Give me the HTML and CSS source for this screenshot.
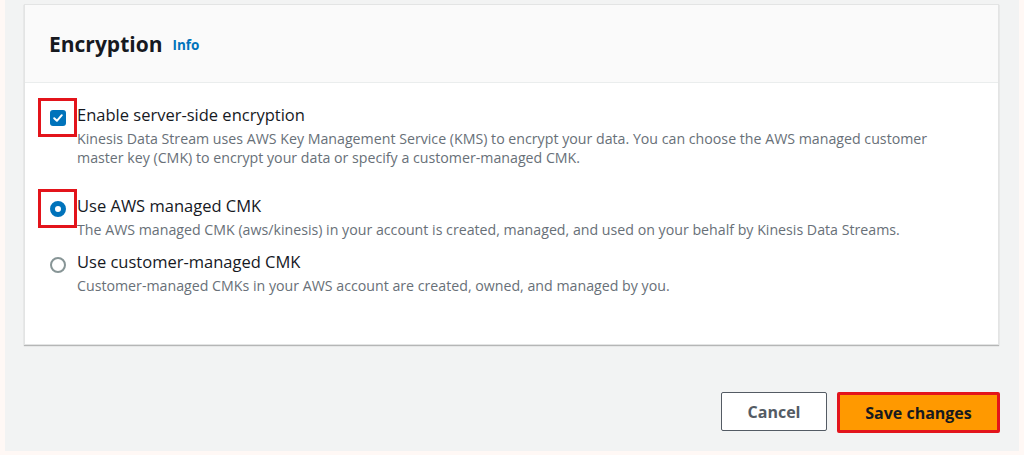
FILE: index.html
```html
<!DOCTYPE html>
<html lang="en">

<head>
    <meta charset="UTF-8">
    <title>Encryption settings</title>
    <link rel="stylesheet" href="styles.css">
</head>

<body>
    <div class="page">
        <div class="card">
            <div class="card_header">
                <h2>Encryption</h2>
                <a class="info" href="#">Info</a>
            </div>
            <div class="card_body">
                <div class="option option_check">
                    <span class="mark_wrap highlight">
                        <span class="checkbox">
                            <svg width="12" height="12" viewBox="0 0 12 12"><path d="M2.2 6.2 L4.9 8.8 L9.8 3.2" fill="none" stroke="#fff" stroke-width="2" stroke-linecap="round" stroke-linejoin="round"/></svg>
                        </span>
                    </span>
                    <div class="option_text">
                        <div class="label">Enable server-side encryption</div>
                        <div class="desc">Kinesis Data Stream uses AWS Key Management Service (KMS) to encrypt your data. You can choose the AWS managed customer master key (CMK) to encrypt your data or specify a customer-managed CMK.</div>
                    </div>
                </div>

                <div class="option option_radio">
                    <span class="mark_wrap highlight">
                        <span class="radio checked"></span>
                    </span>
                    <div class="option_text">
                        <div class="label">Use AWS managed CMK</div>
                        <div class="desc">The AWS managed CMK (aws/kinesis) in your account is created, managed, and used on your behalf by Kinesis Data Streams.</div>
                    </div>
                </div>

                <div class="option option_radio second">
                    <span class="mark_wrap">
                        <span class="radio"></span>
                    </span>
                    <div class="option_text">
                        <div class="label">Use customer-managed CMK</div>
                        <div class="desc">Customer-managed CMKs in your AWS account are created, owned, and managed by you.</div>
                    </div>
                </div>
            </div>
        </div>

        <div class="actions">
            <button class="btn btn_cancel">Cancel</button>
            <button class="btn btn_save">Save changes</button>
        </div>
    </div>
</body>

</html>
```

FILE: styles.css
```css
body {
    margin: 0;
    background: #fff8f5;
    font-family: "Open Sans", "Noto Sans", sans-serif;
    color: #16191f;
}

.page {
    margin: 0 5px;
    height: 451px;
    background: #f2f3f3;
    padding: 4px 20px 0 19px;
    box-sizing: border-box;
}

.card {
    background: #fff;
    border: 1px solid #e3e4e4;
    box-shadow: 0 1px 1px rgba(0, 0, 0, 0.25);
    height: 341px;
    box-sizing: border-box;
}

.card_header {
    height: 78px;
    background: #fafafa;
    border-bottom: 1px solid #eaeded;
    display: flex;
    align-items: center;
    padding: 0 0 0 24px;
    box-sizing: border-box;
}

.card_header h2 {
    margin: 0;
    font-size: 21px;
    font-weight: 700;
    color: #16191f;
}

.info {
    margin-left: 10px;
    margin-top: 3px;
    font-size: 13.5px;
    font-weight: 700;
    color: #0073bb;
    text-decoration: none;
}

.card_body {
    padding: 15px 20px 0 13px;
}

.option {
    display: flex;
    align-items: flex-start;
}

.mark_wrap {
    width: 39px;
    height: 39px;
    box-sizing: border-box;
    display: flex;
    align-items: center;
    justify-content: center;
    flex-shrink: 0;
}

.highlight {
    border: 3px solid #e3141b;
}

.option_text {
    padding-top: 7px;
    width: 885px;
}

.label {
    font-size: 16.5px;
    line-height: 20px;
    color: #16191f;
}

.desc {
    font-size: 14.2px;
    line-height: 19px;
    color: #687078;
    margin-top: 4px;
}

.option_radio {
    margin-top: 22px;
}

.option_radio.second {
    margin-top: 6px;
}

.checkbox {
    width: 16px;
    height: 16px;
    border-radius: 3px;
    background: #0073bb;
    display: flex;
    align-items: center;
    justify-content: center;
}

.radio {
    width: 16px;
    height: 16px;
    border-radius: 50%;
    border: 2px solid #879596;
    box-sizing: border-box;
}

.radio.checked {
    border: 5px solid #0073bb;
}

.actions {
    display: flex;
    justify-content: flex-end;
    gap: 10px;
    margin-top: 47px;
}

.btn {
    font-family: inherit;
    font-size: 16px;
    font-weight: 700;
    height: 39px;
    box-sizing: border-box;
    border-radius: 2px;
    cursor: pointer;
}

.btn_cancel {
    width: 106px;
    background: #fff;
    border: 1px solid #545b64;
    color: #545b64;
}

.btn_save {
    width: 163px;
    height: 41px;
    background: #ff9900;
    border: 3px solid #e3141b;
    color: #16191f;
    margin-right: -1px;
}
```
